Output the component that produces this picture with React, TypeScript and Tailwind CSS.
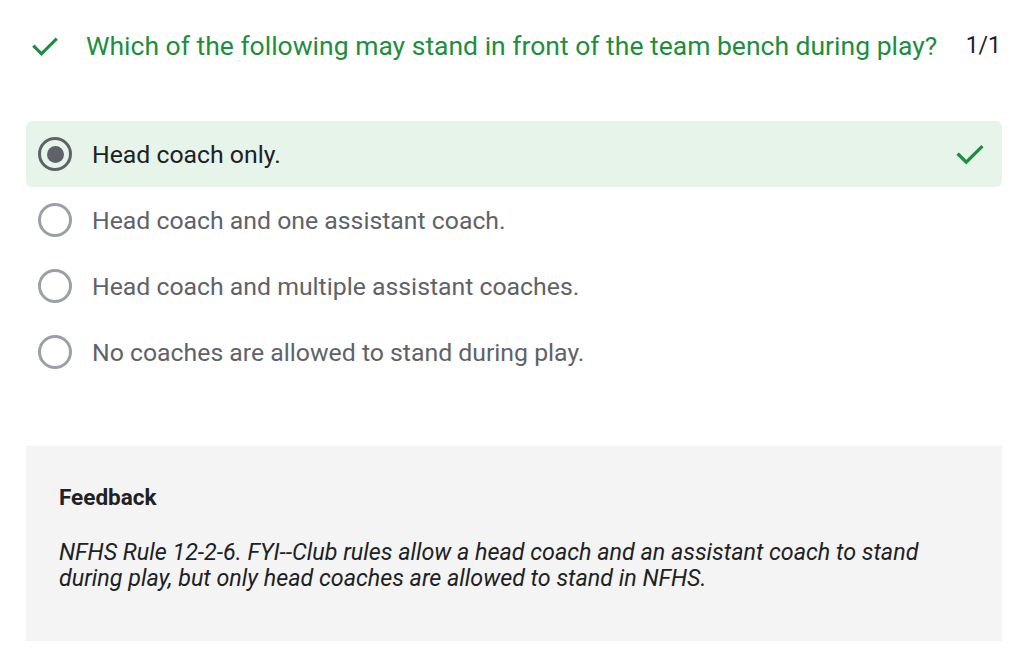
import React from "react";

const Check = ({ className }: { className?: string }) => (
  <svg viewBox="0 0 24 24" className={className} fill="none" stroke="currentColor" strokeWidth={2.2} strokeLinecap="square">
    <path d="M4.5 12.5l5 5 10-10" />
  </svg>
);

const options = [
  "Head coach only.",
  "Head coach and one assistant coach.",
  "Head coach and multiple assistant coaches.",
  "No coaches are allowed to stand during play.",
];

export default function App() {
  return (
    <div className="w-[1023px] h-[662px] bg-white overflow-hidden" style={{ fontFamily: "Roboto, 'Noto Sans', sans-serif" }}>
      <div className="ml-[26px] w-[976px]">
        <div className="flex items-center h-[94px] pb-[2px]">
          <Check className="w-[34px] h-[34px] text-[#1e8e3e] ml-[2px]" />
          <div className="ml-[24px] flex-1 text-[26.5px] text-[#1e8e3e] leading-[32px] whitespace-nowrap">
            Which of the following may stand in front of the team bench during play?
          </div>
          <div className="text-[23px] text-[#202124] mr-[1px]">1/1</div>
        </div>
        <div className="mt-[27px] flex flex-col">
          {options.map((o, i) => (
            <div
              key={i}
              className={`flex items-center h-[66px] rounded-[6px] ${i === 0 ? "bg-[#e6f4ea]" : ""}`}
            >
              <div className={`ml-[12px] w-[34px] h-[34px] rounded-full border-[3px] flex items-center justify-center ${i === 0 ? "border-[#5f6368]" : "border-[#9aa0a6]"}`}>
                {i === 0 && <div className="w-[17px] h-[17px] rounded-full bg-[#5f6368]" />}
              </div>
              <div className={`ml-[20px] flex-1 text-[24.8px] pt-[1px] ${i === 0 ? "text-[#202124]" : "text-[#5f6368]"}`}>{o}</div>
              {i === 0 && <Check className="w-[36px] h-[36px] text-[#1e8e3e] mr-[14px]" />}
            </div>
          ))}
        </div>
        <div className="mt-[61px] bg-[#f4f4f4] h-[195px] pl-[33px] pt-[38px]">
          <div className="text-[22.5px] font-bold text-[#202124] leading-[26px]">Feedback</div>
          <div className="mt-[29px] text-[23.3px] italic text-[#202124] leading-[26px] w-[885px]">
            NFHS Rule 12-2-6. FYI--Club rules allow a head coach and an assistant coach to stand during play, but only head coaches are allowed to stand in NFHS.
          </div>
        </div>
      </div>
    </div>
  );
}
